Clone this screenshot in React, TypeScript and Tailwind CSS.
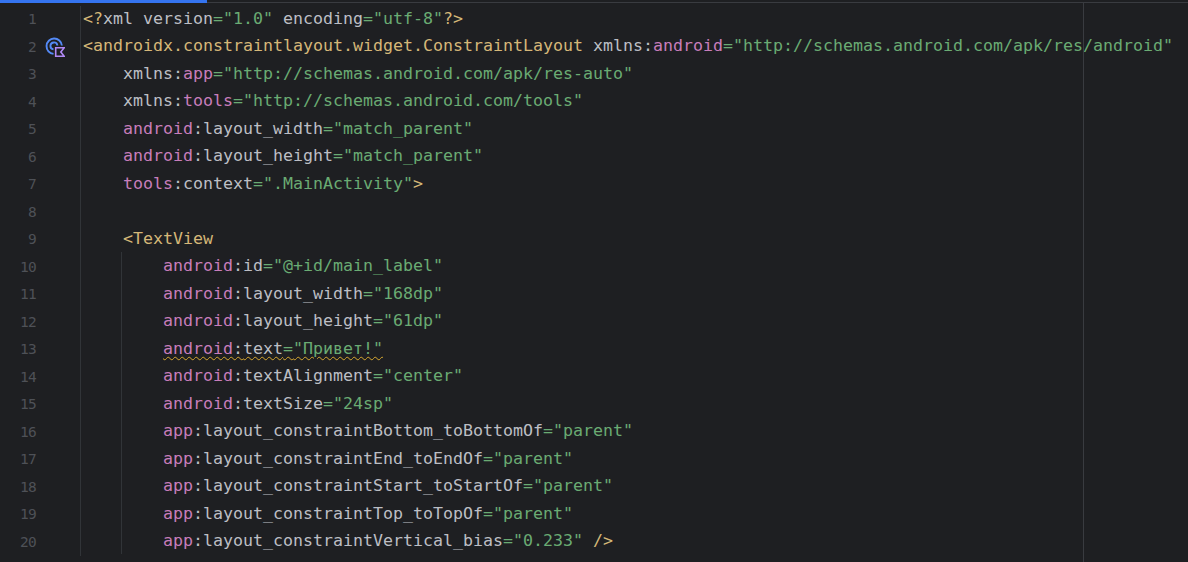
const NS = "text-[#c77dbb]";
const STR = "text-[#6aab73]";
const TAG = "text-[#d5b778]";
const TXT = "text-[#bcbec4]";

type Attr = [string, string, string];

function Row({ n, indent, icon, children }: { n: number; indent?: string; icon?: boolean; children?: React.ReactNode }) {
  return (
    <div className="flex h-[27.5px] items-center">
      <div className="w-[36px] shrink-0 text-right text-[14.5px] tracking-[-0.7px] text-[#4e5157]">{n}</div>
      <div className="flex w-[44px] shrink-0 items-center pl-[9px]">{icon && <RunIcon />}</div>
      <div className="self-stretch border-l border-[#313438] pl-[2px]" />
      <div className={`whitespace-pre ${indent ?? ""}`}>{children}</div>
    </div>
  );
}

function Attribute({ a }: { a: Attr }) {
  return (
    <>
      <span className={a[0] === "xmlns" ? TXT : NS}>{a[0]}</span>
      <span className={TXT}>:</span>
      <span className={a[0] === "xmlns" ? NS : TXT}>{a[1]}</span>
      <span className={STR}>={`"${a[2]}"`}</span>
    </>
  );
}

function RunIcon() {
  return (
    <svg width="20" height="20" viewBox="0 0 20 20" fill="none">
      <path d="M8.5 16.9A7.7 7.7 0 1 1 16.9 8.5" stroke="#548af7" strokeWidth="1.9" />
      <path d="M8.5 12.4A3.5 3.5 0 1 1 12.4 8.5" stroke="#548af7" strokeWidth="1.9" />
      <path d="M10.7 10.7H19.2L15.8 14.9 19.2 19.2H10.7Z" stroke="#b189f5" strokeWidth="1.6" fill="#1e1f22" />
    </svg>
  );
}

const outer: Attr[] = [
  ["xmlns", "app", "http://schemas.android.com/apk/res-auto"],
  ["xmlns", "tools", "http://schemas.android.com/tools"],
  ["android", "layout_width", "match_parent"],
  ["android", "layout_height", "match_parent"],
];

const inner: Attr[] = [
  ["android", "id", "@+id/main_label"],
  ["android", "layout_width", "168dp"],
  ["android", "layout_height", "61dp"],
  ["android", "text", "Привет!"],
  ["android", "textAlignment", "center"],
  ["android", "textSize", "24sp"],
  ["app", "layout_constraintBottom_toBottomOf", "parent"],
  ["app", "layout_constraintEnd_toEndOf", "parent"],
  ["app", "layout_constraintStart_toStartOf", "parent"],
  ["app", "layout_constraintTop_toTopOf", "parent"],
  ["app", "layout_constraintVertical_bias", "0.233"],
];

export default function App() {
  return (
    <div className="relative h-[562px] w-[1188px] overflow-hidden bg-[#1e1f22] font-['DejaVu_Sans_Mono','Liberation_Mono',monospace] text-[16.61px] leading-none">
      <div className="h-[3px] border-b border-[#393b40]">
        <div className="h-[3px] w-[207px] bg-[#3574f0]" />
      </div>
      <div className="pt-[2.5px]">
        <Row n={1}>
          <span className={TAG}>{"<?"}</span>
          <span className={TXT}>xml version</span>
          <span className={STR}>="1.0"</span>
          <span className={TXT}> encoding</span>
          <span className={STR}>="utf-8"</span>
          <span className={TAG}>{"?>"}</span>
        </Row>
        <Row n={2} icon>
          <span className={TAG}>{"<androidx.constraintlayout.widget.ConstraintLayout"}</span>
          <span className={TXT}> xmlns:</span>
          <span className={NS}>android</span>
          <span className={STR}>="http://schemas.android.com/apk/res/android"</span>
        </Row>
        {outer.map((a, i) => (
          <Row key={i} n={3 + i} indent="pl-[40px]">
            <Attribute a={a} />
          </Row>
        ))}
        <Row n={7} indent="pl-[40px]">
          <span className={NS}>tools</span>
          <span className={TXT}>:context</span>
          <span className={STR}>=".MainActivity"</span>
          <span className={TAG}>{">"}</span>
        </Row>
        <Row n={8} />
        <Row n={9} indent="pl-[40px]">
          <span className={TAG}>{"<TextView"}</span>
        </Row>
        {inner.map((a, i) => (
          <Row key={i} n={10 + i} indent="pl-[80px]">
            {a[1] === "text" ? (
              <span className="underline decoration-wavy decoration-[#d6a72f] decoration-1 underline-offset-[2px]">
                <Attribute a={a} />
              </span>
            ) : (
              <Attribute a={a} />
            )}
            {i === inner.length - 1 && <span className={TAG}> {"/>"}</span>}
          </Row>
        ))}
      </div>
      <div className="absolute left-[121px] top-[252px] h-[302px] w-px bg-[#313438]" />
      <div className="absolute left-[1083px] top-[3px] h-[559px] w-px bg-[#393b40]" />
    </div>
  );
}
